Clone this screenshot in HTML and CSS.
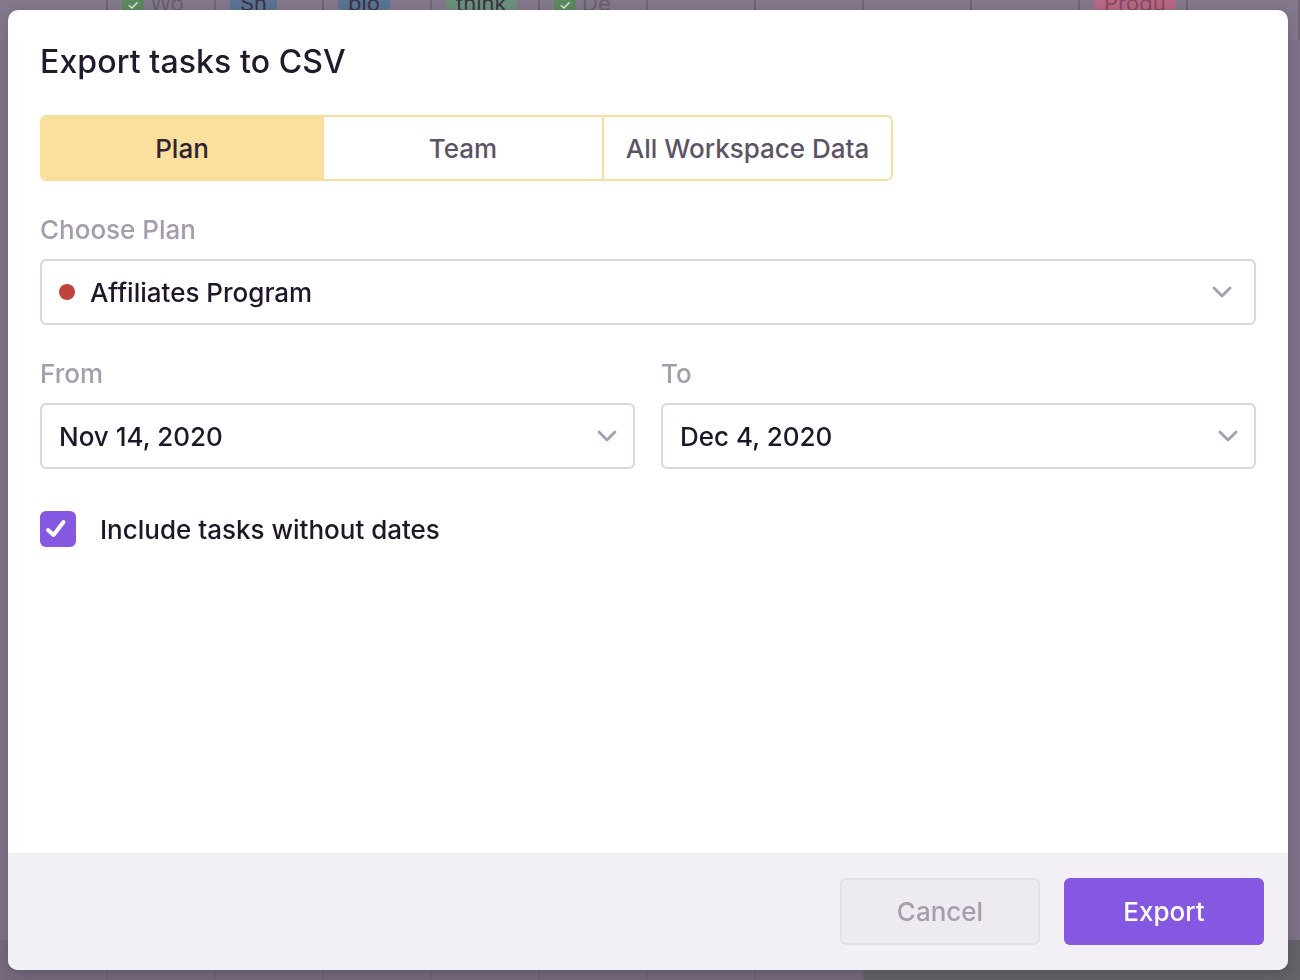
FILE: index.html
```html
<!DOCTYPE html>
<html lang="en">
<head>
<meta charset="utf-8">
<title>Export tasks to CSV</title>
<link rel="stylesheet" href="styles.css">
</head>
<body>
<div class="backdrop">
  <div class="board-top">
    <div class="bcell"></div>
    <div class="bcell"><span class="tick">✓</span><span class="chip chip-plain">Wo</span></div>
    <div class="bcell"><span class="chip chip-blue">Sh</span></div>
    <div class="bcell"><span class="chip chip-blue">blo</span></div>
    <div class="bcell"><span class="chip chip-green">think</span></div>
    <div class="bcell"><span class="tick">✓</span><span class="chip chip-plain">De</span></div>
    <div class="bcell"></div>
    <div class="bcell"></div>
    <div class="bcell"></div>
    <div class="bcell"></div>
    <div class="bcell"><span class="chip chip-pink">Produ</span></div>
    <div class="bcell grow"></div>
  </div>
  <div class="board-mid"></div>
  <div class="board-bottom">
    <div class="bcell"></div>
    <div class="bcell"></div>
    <div class="bcell"></div>
    <div class="bcell"></div>
    <div class="bcell"></div>
    <div class="bcell"></div>
    <div class="bcell"></div>
    <div class="bcell"></div>
    <div class="bcell dark grow"></div>
  </div>
</div>

<div class="overlay">
  <div class="modal">
    <div class="modal-body">
      <h1 class="modal-title">Export tasks to CSV</h1>

      <div class="tabs">
        <button class="tab tab-active">Plan</button>
        <button class="tab">Team</button>
        <button class="tab tab-wide">All Workspace Data</button>
      </div>

      <div class="field">
        <div class="field-label">Choose Plan</div>
        <div class="select select-plan">
          <span class="dot"></span>
          <span class="select-value">Affiliates Program</span>
          <svg class="chevron" viewBox="0 0 20 12" width="20" height="12"><path d="M2 2 L10 10 L18 2" fill="none" stroke="#a79eb0" stroke-width="2.8" stroke-linecap="round" stroke-linejoin="round"/></svg>
        </div>
      </div>

      <div class="field-row">
        <div class="field">
          <div class="field-label">From</div>
          <div class="select">
            <span class="select-value">Nov 14, 2020</span>
            <svg class="chevron" viewBox="0 0 20 12" width="20" height="12"><path d="M2 2 L10 10 L18 2" fill="none" stroke="#a79eb0" stroke-width="2.8" stroke-linecap="round" stroke-linejoin="round"/></svg>
          </div>
        </div>
        <div class="field">
          <div class="field-label">To</div>
          <div class="select">
            <span class="select-value">Dec 4, 2020</span>
            <svg class="chevron" viewBox="0 0 20 12" width="20" height="12"><path d="M2 2 L10 10 L18 2" fill="none" stroke="#a79eb0" stroke-width="2.8" stroke-linecap="round" stroke-linejoin="round"/></svg>
          </div>
        </div>
      </div>

      <label class="check-row">
        <span class="checkbox">
          <svg class="checkmark" viewBox="0 0 36 36" width="36" height="36"><path d="M8 19 L13.5 24 L23.5 11" fill="none" stroke="#ffffff" stroke-width="4" stroke-linecap="round" stroke-linejoin="round"/></svg>
        </span>
        <span class="check-text">Include tasks without dates</span>
      </label>
    </div>

    <div class="modal-footer">
      <button class="btn btn-cancel">Cancel</button>
      <button class="btn btn-export">Export</button>
    </div>
  </div>
</div>
</body>
</html>
```

FILE: styles.css
```css
* { box-sizing: border-box; }

html, body {
  margin: 0;
  padding: 0;
  width: 1300px;
  height: 980px;
  overflow: hidden;
}

body {
  background: #7f7489;
  font-family: Inter, "Noto Sans", "Liberation Sans", sans-serif;
  color: #221a2c;
}

/* ---------- dimmed board behind the dialog ---------- */
.backdrop {
  display: flex;
  flex-direction: column;
  height: 980px;
}

.board-top {
  display: flex;
  height: 40px;
  background: #85798d;
}

.board-mid {
  flex: 1;
  background: #7f7489;
}

.board-bottom {
  display: flex;
  height: 40px;
  background: #776b7f;
}

.bcell {
  width: 108px;
  height: 100%;
  border-right: 2px solid #706579;
  padding: 0 0 0 14px;
  overflow: hidden;
  display: flex;
  align-items: flex-start;
  gap: 6px;
  flex: none;
}
.bcell.dark { background: #66646a; border-right: none; }
.grow { flex: 1; }

.tick {
  margin-top: -4px;
  width: 22px;
  height: 14px;
  background: #5c8a5f;
  color: #e8efe8;
  font-size: 14px;
  text-align: center;
}

.chip {
  display: inline-block;
  margin-top: -8px;
  height: 18px;
  padding: 0 10px;
  line-height: 22px;
  font-size: 22px;
  color: #3c3344;
  border-radius: 3px;
}
.chip-plain { color: #6a5f72; padding: 0; }
.chip-blue { background: #5a7593; }
.chip-green { background: #6b937c; }
.chip-pink { background: #b86a85; color: #8b4a62; }

/* ---------- overlay + modal ---------- */
.overlay {
  position: fixed;
  inset: 0;
  display: flex;
  padding: 10px 12px 10px 8px;
}

.modal {
  flex: 1;
  display: flex;
  flex-direction: column;
  background: #ffffff;
  border-radius: 10px;
  overflow: hidden;
  box-shadow: 0 4px 16px rgba(30, 20, 40, 0.25);
}

.modal-body {
  flex: 1;
  padding: 34px 32px 0 32px;
}

.modal-title {
  margin: 0;
  font-size: 32px;
  line-height: 36px;
  font-weight: 500;
  color: #221a2c;
  letter-spacing: 0.1px;
}

/* ---------- tabs ---------- */
.tabs {
  display: flex;
  margin-top: 35px;
  width: 853px;
  height: 66px;
  border: 2px solid #f8de9c;
  border-radius: 6px;
  overflow: hidden;
}

.tab {
  width: 280px;
  border: none;
  background: #ffffff;
  font-family: inherit;
  font-size: 26px;
  font-weight: 500;
  color: #5d5367;
  padding: 0;
  cursor: pointer;
}
.tab + .tab { border-left: 2px solid #f8de9c; }
.tab-wide { flex: 1; }
.tab-active {
  background: #fbdf9c;
  color: #2e2438;
}

/* ---------- fields ---------- */
.field {
  margin-top: 34px;
  flex: 1;
}

.field-label {
  font-size: 26px;
  font-weight: 500;
  line-height: 30px;
  color: #a59cad;
  margin-bottom: 14px;
}

.select {
  display: flex;
  align-items: center;
  height: 66px;
  border: 2px solid #dcd7df;
  border-radius: 6px;
  padding: 0 16px 0 17px;
  background: #ffffff;
}
.select-plan { padding-right: 22px; }

.dot {
  width: 16px;
  height: 16px;
  border-radius: 50%;
  background: #c0443b;
  margin-right: 15px;
  flex: none;
}

.select-value {
  flex: 1;
  font-size: 26px;
  font-weight: 500;
  color: #1f1729;
}

.chevron { flex: none; }

.field-row {
  display: flex;
  gap: 26px;
}

/* ---------- checkbox ---------- */
.check-row {
  display: flex;
  align-items: center;
  margin-top: 42px;
  gap: 24px;
}

.checkbox {
  width: 36px;
  height: 36px;
  border-radius: 6px;
  background: #8458e0;
  flex: none;
}

.checkmark { display: block; }

.check-text {
  font-size: 26px;
  font-weight: 500;
  color: #1f1729;
}

/* ---------- footer ---------- */
.modal-footer {
  display: flex;
  justify-content: flex-end;
  gap: 24px;
  height: 117px;
  padding: 25px 24px 25px 0;
  background: #f2f0f4;
}

.btn {
  width: 200px;
  height: 67px;
  border-radius: 6px;
  font-family: inherit;
  font-size: 26px;
  font-weight: 500;
  cursor: pointer;
}

.btn-cancel {
  background: #edebef;
  border: 2px solid #e3e0e6;
  color: #a69cad;
}

.btn-export {
  background: #8458e0;
  border: none;
  color: #ffffff;
}
```
